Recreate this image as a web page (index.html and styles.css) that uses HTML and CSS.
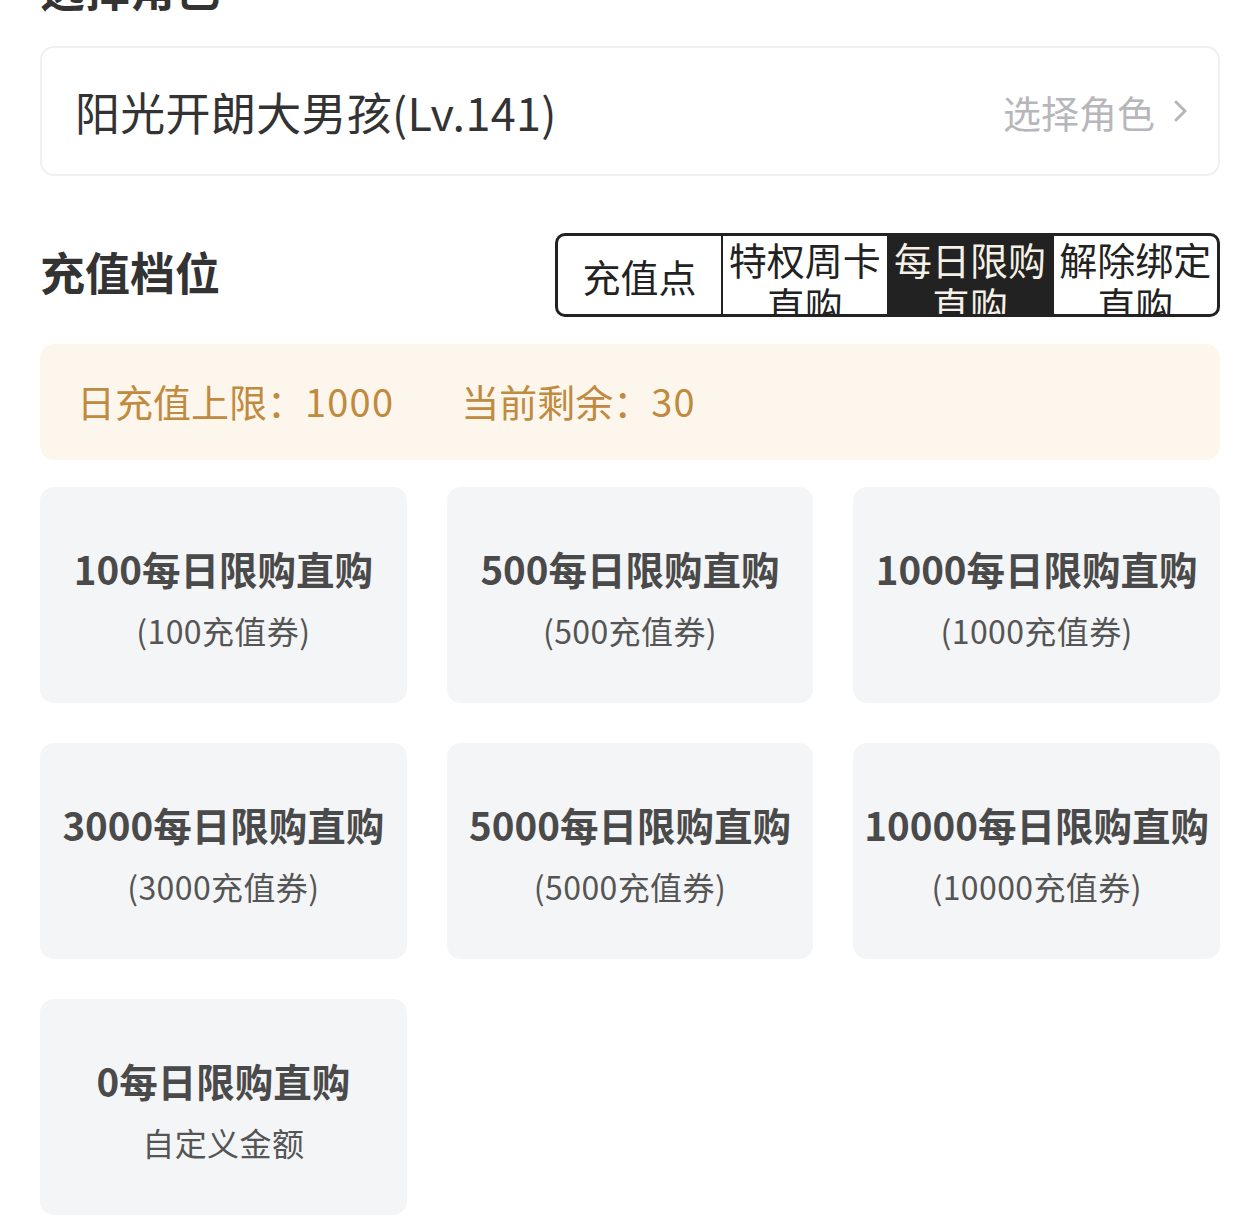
FILE: index.html
```html
<!DOCTYPE html>
<html lang="zh-CN">
<head>
<meta charset="utf-8">
<title>充值</title>
<link rel="stylesheet" href="styles.css">
</head>
<body>
<main class="page">
  <h2 class="section-title top-title">选择角色</h2>
  <div class="role-card">
    <span class="role-name">阳光开朗大男孩(Lv.141)</span>
    <span class="role-select">选择角色
      <svg class="chev" width="14" height="24" viewBox="0 0 14 24"><polyline points="2,3 11,12 2,21" fill="none" stroke="#b7b7bb" stroke-width="3" stroke-linecap="round" stroke-linejoin="round"/></svg>
    </span>
  </div>

  <div class="tier-head">
    <h2 class="section-title">充值档位</h2>
    <div class="tabs">
      <div class="tab single">充值点</div>
      <div class="tab">特权周卡直购</div>
      <div class="tab active">每日限购直购</div>
      <div class="tab">解除绑定直购</div>
    </div>
  </div>

  <div class="notice">
    <span>日充值上限：<span class="num">1000</span></span>
    <span class="remain">当前剩余：<span class="num">30</span></span>
  </div>

  <div class="grid">
    <div class="card"><div class="c-title">100每日限购直购</div><div class="c-sub">(100充值券)</div></div>
    <div class="card"><div class="c-title">500每日限购直购</div><div class="c-sub">(500充值券)</div></div>
    <div class="card"><div class="c-title">1000每日限购直购</div><div class="c-sub">(1000充值券)</div></div>
    <div class="card"><div class="c-title">3000每日限购直购</div><div class="c-sub">(3000充值券)</div></div>
    <div class="card"><div class="c-title">5000每日限购直购</div><div class="c-sub">(5000充值券)</div></div>
    <div class="card"><div class="c-title">10000每日限购直购</div><div class="c-sub">(10000充值券)</div></div>
    <div class="card"><div class="c-title">0每日限购直购</div><div class="c-sub">自定义金额</div></div>
  </div>
</main>
</body>
</html>
```

FILE: styles.css
```css
* { box-sizing: border-box; }
html, body {
  margin: 0;
  padding: 0;
  background: #ffffff;
  font-family: "Noto Sans CJK SC", "Noto Sans", sans-serif;
  color: #333;
}
.page {
  padding: 0 40px 40px 40px;
}
.section-title {
  margin: 0;
  font-size: 45px;
  line-height: 60px;
  font-weight: 700;
  color: #333;
}
.top-title {
  margin-top: -42px;
}
.role-card {
  margin-top: 28px;
  height: 130px;
  border: 2px solid #f0f0f1;
  border-radius: 14px;
  display: flex;
  align-items: center;
  justify-content: space-between;
  padding: 0 30px 0 33px;
}
.role-name {
  font-size: 45px;
  color: #333;
  line-height: 1;
  letter-spacing: 0.3px;
}
.role-select {
  display: flex;
  align-items: center;
  gap: 19px;
  font-size: 38px;
  color: #b7b7bb;
}
.chev { display: block; }

.tier-head {
  margin-top: 57px;
  display: flex;
  align-items: center;
  justify-content: space-between;
}
.tier-head .section-title { position: relative; top: -3px; }
.tabs {
  width: 665px;
  height: 84px;
  border: 3px solid #222;
  border-radius: 10px;
  display: flex;
  overflow: hidden;
  background: #fff;
}
.tab {
  flex: 1;
  overflow: hidden;
  text-align: center;
  font-size: 38px;
  line-height: 45px;
  color: #222;
  padding: 0 2px;
  border-left: 2px solid #222;
}
.tab:first-child { border-left: none; }
.tab.single {
  display: flex;
  align-items: center;
  justify-content: center;
}
.tab.active {
  background: #222;
  color: #f6f1e6;
}

.notice {
  margin-top: 27px;
  height: 116px;
  background: #fdf6ec;
  border-radius: 14px;
  display: flex;
  align-items: center;
  padding-left: 37px;
  padding-bottom: 3px;
  font-size: 38px;
  color: #c08a3f;
}
.num { letter-spacing: 1.2px; }
.remain { margin-left: 67px; }

.grid {
  margin-top: 27px;
  display: grid;
  grid-template-columns: repeat(3, 1fr);
  column-gap: 40px;
  row-gap: 40px;
}
.card {
  height: 216px;
  background: #f4f5f7;
  border-radius: 14px;
  display: flex;
  flex-direction: column;
  align-items: center;
  justify-content: center;
  padding-top: 3px;
}
.c-title {
  font-size: 38.5px;
  font-weight: 700;
  color: #4a4a4a;
  line-height: 50px;
  white-space: nowrap;
}
.c-sub {
  margin-top: 17px;
  font-size: 32px;
  color: #555;
  line-height: 40px;
  white-space: nowrap;
  letter-spacing: 0.4px;
}
```
